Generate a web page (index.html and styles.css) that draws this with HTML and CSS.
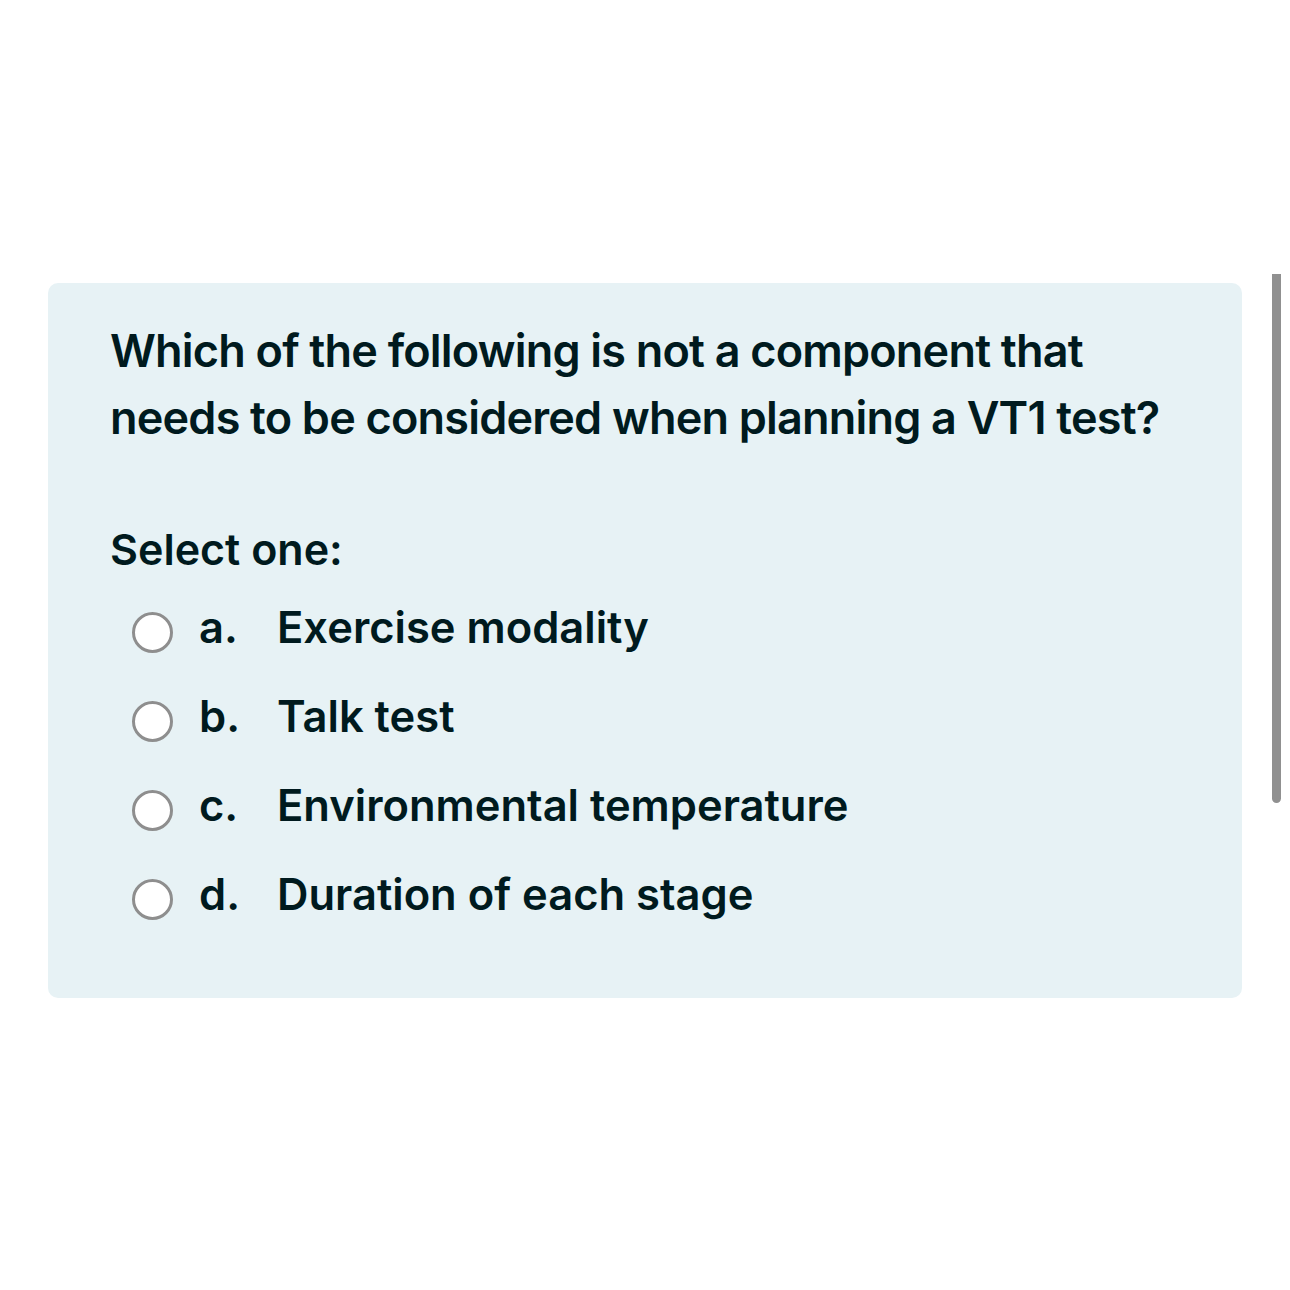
FILE: index.html
```html
<!DOCTYPE html>
<html lang="en">
<head>
<meta charset="utf-8">
<title>Question</title>
<link rel="stylesheet" href="styles.css">
</head>
<body>
<div class="page">
  <div class="card">
    <div class="qtext">Which of the following is not a component that needs to be considered when planning a VT1 test?</div>
    <div class="prompt">Select one:</div>
    <div class="answers">
      <div class="option"><span class="radio"></span><span class="letter">a.</span><span class="label">Exercise modality</span></div>
      <div class="option"><span class="radio"></span><span class="letter">b.</span><span class="label">Talk test</span></div>
      <div class="option"><span class="radio"></span><span class="letter">c.</span><span class="label">Environmental temperature</span></div>
      <div class="option"><span class="radio"></span><span class="letter">d.</span><span class="label">Duration of each stage</span></div>
    </div>
  </div>
</div>
<div class="scrollbar"></div>
</body>
</html>
```

FILE: styles.css
```css
html, body {
  margin: 0;
  padding: 0;
  background: #ffffff;
}
body {
  font-family: Inter, "Noto Sans", "Liberation Sans", sans-serif;
  color: #001a1e;
  width: 1290px;
  height: 1290px;
  overflow: hidden;
}
.page {
  padding-top: 283px;
  padding-left: 48px;
}
.card {
  box-sizing: border-box;
  width: 1194px;
  height: 715px;
  background: #e7f2f5;
  border-radius: 10px;
  padding: 34px 62px 0 62px;
}
.qtext {
  font-size: 45px;
  font-weight: 600;
  line-height: 67px;
  letter-spacing: -0.8px;
  width: 1080px;
}
.prompt {
  margin-top: 68px;
  font-size: 43px;
  font-weight: 600;
  line-height: 60px;
}
.answers {
  margin-top: 4px;
  display: flex;
  flex-direction: column;
}
.option {
  display: flex;
  align-items: flex-start;
  height: 89px;
  font-size: 43.5px;
  font-weight: 600;
  line-height: 89px;
}
.radio {
  box-sizing: border-box;
  width: 41px;
  height: 41px;
  border: 3px solid #8e8e8e;
  border-radius: 50%;
  background: #ffffff;
  margin-left: 22px;
  margin-top: 29px;
  flex: none;
}
.letter {
  margin-left: 26px;
  width: 78px;
  flex: none;
}
.scrollbar {
  position: fixed;
  left: 1272px;
  top: 274px;
  width: 9px;
  height: 529px;
  background: #909090;
  border-radius: 0 0 5px 5px;
}
```
